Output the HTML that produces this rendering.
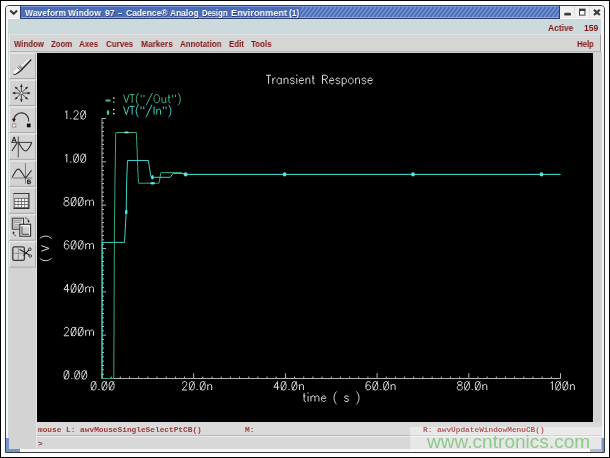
<!DOCTYPE html>
<html>
<head>
<meta charset="utf-8">
<style>
html,body{margin:0;padding:0;}
body{width:610px;height:458px;overflow:hidden;background:#fff;position:relative;font-family:"Liberation Sans",sans-serif;}
.abs{position:absolute;}
.tt,.mn,.status,#wm{will-change:transform;}
#outer{left:0;top:0;width:608px;height:456px;border:1px solid #000;}
#win{left:5px;top:5px;width:598px;height:446px;border:1px solid #3c3c3c;border-radius:4px 4px 0 0;background:#f6f6f6;}
#inner{left:8.2px;top:19px;width:593px;height:430.3px;background:#cddadd;}
#title{left:20px;top:5px;width:540px;height:14px;background:#4b6cb7;overflow:hidden;box-sizing:border-box;border-top:1px solid #2c3c66;border-bottom:1px solid #2c3c66;border-left:1px solid #2c3c66;border-right:1px solid #2c3c66;}
#titlehl{left:21px;top:6px;width:538px;height:1px;background:#7f9bdc;}
#titlehl2{left:21px;top:17px;width:538px;height:1px;background:#8ea8e0;}
.tbtn{top:6px;height:12px;background:#f1f1f1;}
.tt{text-shadow:0.6px 0.6px 0.5px rgba(10,20,60,0.55);top:6.3px;font-size:9.6px;font-weight:bold;color:#fff;line-height:13px;white-space:nowrap;transform-origin:0 0;}
#menubar{left:9px;top:34px;width:592px;height:18px;background:#d6d6d6;box-sizing:border-box;border-top:1px solid #e2e2e2;border-left:1px solid #ececec;border-right:1px solid #a0a0a0;border-bottom:1px solid #b4b4b4;}
.mn{top:39.0px;font-size:8.6px;font-weight:bold;color:#801616;line-height:11px;white-space:nowrap;transform-origin:0 0;}
#grayarea{left:8.5px;top:52px;width:593px;height:397.3px;background:#d3d3d3;}
#tbline{left:36px;top:53px;width:1px;height:396px;background:#e6e6e6;}
#plot{left:37px;top:53px;width:556px;height:369px;background:#000;}
#status1{left:37px;top:422px;width:564px;height:12.6px;background:#dadada;border-bottom:1px solid #b8b8b8;}
#status2{left:37px;top:436px;width:564px;height:13px;background:#d8d8d8;border-top:1px solid #ededed;box-sizing:border-box;}
.status{font-family:"Liberation Mono",monospace;font-size:7.8px;font-weight:bold;color:#a03a3a;white-space:pre;line-height:10px;}
.corner{background:#7793cc;}
#wmbox{left:410px;top:427px;width:192px;height:25px;background:rgba(255,255,255,0.4);}
#wm{left:426.8px;top:430.7px;font-size:19px;line-height:22px;color:#8fca8d;white-space:nowrap;transform-origin:0 0;transform:scaleX(1.004);}
svg{position:absolute;left:0;top:0;}
</style>
</head>
<body>
<div class="abs" id="outer"></div>
<div class="abs" id="win"></div>
<div class="abs" id="inner"></div>
<div class="abs" id="title"></div>
<div class="abs" id="titlehl"></div>
<div class="abs" id="titlehl2"></div>
<svg width="610" height="24" viewBox="0 0 610 24"><defs><clipPath id="hc"><rect x="300.5" y="7" width="258.5" height="10"/></clipPath></defs><path d="M284.0 17.5L292.0 6.5M288.0 17.5L296.0 6.5M292.0 17.5L300.0 6.5M296.0 17.5L304.0 6.5M300.0 17.5L308.0 6.5M304.0 17.5L312.0 6.5M308.0 17.5L316.0 6.5M312.0 17.5L320.0 6.5M316.0 17.5L324.0 6.5M320.0 17.5L328.0 6.5M324.0 17.5L332.0 6.5M328.0 17.5L336.0 6.5M332.0 17.5L340.0 6.5M336.0 17.5L344.0 6.5M340.0 17.5L348.0 6.5M344.0 17.5L352.0 6.5M348.0 17.5L356.0 6.5M352.0 17.5L360.0 6.5M356.0 17.5L364.0 6.5M360.0 17.5L368.0 6.5M364.0 17.5L372.0 6.5M368.0 17.5L376.0 6.5M372.0 17.5L380.0 6.5M376.0 17.5L384.0 6.5M380.0 17.5L388.0 6.5M384.0 17.5L392.0 6.5M388.0 17.5L396.0 6.5M392.0 17.5L400.0 6.5M396.0 17.5L404.0 6.5M400.0 17.5L408.0 6.5M404.0 17.5L412.0 6.5M408.0 17.5L416.0 6.5M412.0 17.5L420.0 6.5M416.0 17.5L424.0 6.5M420.0 17.5L428.0 6.5M424.0 17.5L432.0 6.5M428.0 17.5L436.0 6.5M432.0 17.5L440.0 6.5M436.0 17.5L444.0 6.5M440.0 17.5L448.0 6.5M444.0 17.5L452.0 6.5M448.0 17.5L456.0 6.5M452.0 17.5L460.0 6.5M456.0 17.5L464.0 6.5M460.0 17.5L468.0 6.5M464.0 17.5L472.0 6.5M468.0 17.5L476.0 6.5M472.0 17.5L480.0 6.5M476.0 17.5L484.0 6.5M480.0 17.5L488.0 6.5M484.0 17.5L492.0 6.5M488.0 17.5L496.0 6.5M492.0 17.5L500.0 6.5M496.0 17.5L504.0 6.5M500.0 17.5L508.0 6.5M504.0 17.5L512.0 6.5M508.0 17.5L516.0 6.5M512.0 17.5L520.0 6.5M516.0 17.5L524.0 6.5M520.0 17.5L528.0 6.5M524.0 17.5L532.0 6.5M528.0 17.5L536.0 6.5M532.0 17.5L540.0 6.5M536.0 17.5L544.0 6.5M540.0 17.5L548.0 6.5M544.0 17.5L552.0 6.5M548.0 17.5L556.0 6.5M552.0 17.5L560.0 6.5M556.0 17.5L564.0 6.5M560.0 17.5L568.0 6.5M564.0 17.5L572.0 6.5M568.0 17.5L576.0 6.5M572.0 17.5L580.0 6.5" stroke="#7997d5" stroke-width="1.4" fill="none" clip-path="url(#hc)"/></svg>
<div class="abs tbtn" style="left:6px;width:14px;border-radius:3px 0 0 0"></div>
<div class="abs tbtn" style="left:560px;width:44px;border-radius:0 3px 0 0"></div>
<div class="abs" style="left:574px;top:6px;width:1px;height:12px;background:#dcdcdc"></div>
<div class="abs" style="left:589px;top:6px;width:1px;height:12px;background:#dcdcdc"></div>
<svg width="610" height="24" viewBox="0 0 610 24">
<path d="M10.3 10.6L13.7 13.8L17.1 10.6" fill="none" stroke="#3a3a3a" stroke-width="2.1"/>
<rect x="564.2" y="12.8" width="6.8" height="2.8" rx="1.2" fill="#3c3c3c"/>
<rect x="579.5" y="9.3" width="5.4" height="5.8" fill="#fff" stroke="#3c3c3c" stroke-width="1"/>
<rect x="579" y="8.8" width="6.4" height="2.2" fill="#3c3c3c"/>
<path d="M594 9.8L599.8 15M599.8 9.8L594 15" fill="none" stroke="#3a3a3a" stroke-width="2.2"/>
</svg>
<div class="abs" id="menubar"></div>
<div class="abs tt" style="left:24.7px;transform:scaleX(0.891)">Waveform</div>
<div class="abs tt" style="left:68.2px;transform:scaleX(0.899)">Window</div>
<div class="abs tt" style="left:105.1px;transform:scaleX(0.918)">97</div>
<div class="abs tt" style="left:117.9px;transform:scaleX(0.767)">–</div>
<div class="abs tt" style="left:125.5px;transform:scaleX(0.882)">Cadence®</div>
<div class="abs tt" style="left:169.6px;transform:scaleX(0.880)">Analog</div>
<div class="abs tt" style="left:201.6px;transform:scaleX(0.797)">Design</div>
<div class="abs tt" style="left:230.8px;transform:scaleX(0.955)">Environment</div>
<div class="abs tt" style="left:289.4px;transform:scaleX(0.869)">(1)</div>
<div class="abs mn" style="left:14.0px;transform:scaleX(0.907)">Window</div>
<div class="abs mn" style="left:51.4px;transform:scaleX(0.902)">Zoom</div>
<div class="abs mn" style="left:79.2px;transform:scaleX(0.930)">Axes</div>
<div class="abs mn" style="left:105.8px;transform:scaleX(0.933)">Curves</div>
<div class="abs mn" style="left:140.6px;transform:scaleX(0.965)">Markers</div>
<div class="abs mn" style="left:179.6px;transform:scaleX(0.915)">Annotation</div>
<div class="abs mn" style="left:228.7px;transform:scaleX(0.924)">Edit</div>
<div class="abs mn" style="left:250.9px;transform:scaleX(0.925)">Tools</div>
<div class="abs mn" style="left:576.5px;transform:scaleX(0.902)">Help</div>
<div class="abs mn" style="top:22.6px;left:547.9px;transform:scaleX(0.977)">Active</div>
<div class="abs mn" style="top:22.6px;left:583.7px;transform:scaleX(0.969)">159</div>
<div class="abs" id="grayarea"></div>
<div class="abs" id="tbline"></div>
<div class="abs" id="plot"></div>
<div class="abs" id="status1"></div>
<div class="abs" id="status2"></div>
<div class="abs status" style="left:38.4px;top:424.8px">mouse L: awvMouseSingleSelectPtCB()</div>
<div class="abs status" style="left:244.5px;top:424.8px">M:</div>
<div class="abs status" style="left:38px;top:438.5px">&gt;</div>
<div class="abs corner" style="left:6px;top:438px;width:3px;height:14px"></div>
<div class="abs corner" style="left:6px;top:449.2px;width:13.7px;height:2.8px"></div>
<div class="abs corner" style="left:601px;top:438px;width:3px;height:14px"></div>
<div class="abs corner" style="left:590.3px;top:449.2px;width:13.7px;height:2.8px"></div>
<svg width="610" height="458" viewBox="0 0 610 458">
<path d="M268.57 75.19L268.57 83.80M266.10 75.19L271.04 75.19M272.80 78.06L272.80 83.80M272.80 80.52L273.15 79.29L273.86 78.47L274.56 78.06L275.62 78.06M281.26 78.06L281.26 83.80M281.26 79.29L280.55 78.47L279.85 78.06L278.79 78.06L278.09 78.47L277.38 79.29L277.03 80.52L277.03 81.34L277.38 82.57L278.09 83.39L278.79 83.80L279.85 83.80L280.55 83.39L281.26 82.57M284.08 78.06L284.08 83.80M284.08 79.70L285.14 78.47L285.84 78.06L286.90 78.06L287.60 78.47L287.96 79.70L287.96 83.80M294.30 79.29L293.95 78.47L292.89 78.06L291.83 78.06L290.78 78.47L290.42 79.29L290.78 80.11L291.48 80.52L293.24 80.93L293.95 81.34L294.30 82.16L294.30 82.57L293.95 83.39L292.89 83.80L291.83 83.80L290.78 83.39L290.42 82.57M296.42 75.19L296.77 75.60L297.12 75.19L296.77 74.78L296.42 75.19M296.77 78.06L296.77 83.80M299.24 80.52L303.47 80.52L303.47 79.70L303.11 78.88L302.76 78.47L302.06 78.06L301.00 78.06L300.29 78.47L299.59 79.29L299.24 80.52L299.24 81.34L299.59 82.57L300.29 83.39L301.00 83.80L302.06 83.80L302.76 83.39L303.47 82.57M305.94 78.06L305.94 83.80M305.94 79.70L306.99 78.47L307.70 78.06L308.75 78.06L309.46 78.47L309.81 79.70L309.81 83.80M312.98 75.19L312.98 82.16L313.34 83.39L314.04 83.80L314.75 83.80M311.93 78.06L314.39 78.06M322.50 75.19L322.50 83.80M322.50 75.19L325.67 75.19L326.73 75.60L327.08 76.01L327.44 76.83L327.44 77.65L327.08 78.47L326.73 78.88L325.67 79.29L322.50 79.29M324.97 79.29L327.44 83.80M329.55 80.52L333.78 80.52L333.78 79.70L333.43 78.88L333.08 78.47L332.37 78.06L331.31 78.06L330.61 78.47L329.90 79.29L329.55 80.52L329.55 81.34L329.90 82.57L330.61 83.39L331.31 83.80L332.37 83.80L333.08 83.39L333.78 82.57M339.77 79.29L339.42 78.47L338.36 78.06L337.31 78.06L336.25 78.47L335.90 79.29L336.25 80.11L336.95 80.52L338.72 80.93L339.42 81.34L339.77 82.16L339.77 82.57L339.42 83.39L338.36 83.80L337.31 83.80L336.25 83.39L335.90 82.57M342.24 78.06L342.24 86.67M342.24 79.29L342.95 78.47L343.65 78.06L344.71 78.06L345.41 78.47L346.12 79.29L346.47 80.52L346.47 81.34L346.12 82.57L345.41 83.39L344.71 83.80L343.65 83.80L342.95 83.39L342.24 82.57M350.35 78.06L349.64 78.47L348.94 79.29L348.59 80.52L348.59 81.34L348.94 82.57L349.64 83.39L350.35 83.80L351.41 83.80L352.11 83.39L352.82 82.57L353.17 81.34L353.17 80.52L352.82 79.29L352.11 78.47L351.41 78.06L350.35 78.06M355.64 78.06L355.64 83.80M355.64 79.70L356.69 78.47L357.40 78.06L358.46 78.06L359.16 78.47L359.51 79.70L359.51 83.80M365.86 79.29L365.51 78.47L364.45 78.06L363.39 78.06L362.33 78.47L361.98 79.29L362.33 80.11L363.04 80.52L364.80 80.93L365.51 81.34L365.86 82.16L365.86 82.57L365.51 83.39L364.45 83.80L363.39 83.80L362.33 83.39L361.98 82.57M367.97 80.52L372.20 80.52L372.20 79.70L371.85 78.88L371.50 78.47L370.79 78.06L369.74 78.06L369.03 78.47L368.33 79.29L367.97 80.52L367.97 81.34L368.33 82.57L369.03 83.39L369.74 83.80L370.79 83.80L371.50 83.39L372.20 82.57" fill="none" stroke="#dcdcdc" stroke-width="1" />
<path d="M123.55 94.61L126.31 102.80M129.08 94.61L126.31 102.80M132.20 94.61L132.20 102.80M129.77 94.61L134.62 94.61M138.77 93.05L138.08 93.83L137.39 95.00L136.69 96.56L136.35 98.51L136.35 100.07L136.69 102.02L137.39 103.58L138.08 104.75L138.77 105.53M141.19 94.61L141.19 97.34M143.96 94.61L143.96 97.34M152.26 93.05L146.04 105.53M156.07 94.61L155.38 95.00L154.69 95.78L154.34 96.56L153.99 97.73L153.99 99.68L154.34 100.85L154.69 101.63L155.38 102.41L156.07 102.80L157.45 102.80L158.15 102.41L158.84 101.63L159.18 100.85L159.53 99.68L159.53 97.73L159.18 96.56L158.84 95.78L158.15 95.00L157.45 94.61L156.07 94.61M161.95 97.34L161.95 101.24L162.30 102.41L162.99 102.80L164.03 102.80L164.72 102.41L165.76 101.24M165.76 97.34L165.76 102.80M168.87 94.61L168.87 101.24L169.22 102.41L169.91 102.80L170.60 102.80M167.83 97.34L170.26 97.34M172.68 94.61L172.68 97.34M175.45 94.61L175.45 97.34M177.87 93.05L178.56 93.83L179.25 95.00L179.94 96.56L180.29 98.51L180.29 100.07L179.94 102.02L179.25 103.58L178.56 104.75L177.87 105.53" fill="none" stroke="#3fae86" stroke-width="1" />
<path d="M123.54 106.41L126.29 114.60M129.03 106.41L126.29 114.60M132.12 106.41L132.12 114.60M129.72 106.41L134.52 106.41M138.63 104.85L137.95 105.63L137.26 106.80L136.58 108.36L136.23 110.31L136.23 111.87L136.58 113.82L137.26 115.38L137.95 116.55L138.63 117.33M141.04 106.41L141.04 109.14M143.78 106.41L143.78 109.14M152.01 104.85L145.84 117.33M154.07 106.41L154.07 114.60M156.81 109.14L156.81 114.60M156.81 110.70L157.84 109.53L158.53 109.14L159.56 109.14L160.24 109.53L160.59 110.70L160.59 114.60M163.33 106.41L163.33 109.14M166.07 106.41L166.07 109.14M168.48 104.85L169.16 105.63L169.85 106.80L170.53 108.36L170.88 110.31L170.88 111.87L170.53 113.82L169.85 115.38L169.16 116.55L168.48 117.33" fill="none" stroke="#45cfc8" stroke-width="1" />
<ellipse cx="108.0" cy="100.5" rx="2.9" ry="1.25" fill="#45a882"/>
<ellipse cx="108.0" cy="112.5" rx="1.25" ry="2.5" fill="#3fcfae"/>
<rect x="113.0" y="97.4" width="1.5" height="1.4" fill="#dfe8e6"/>
<rect x="113.0" y="101.5" width="1.5" height="1.4" fill="#6fc4a4"/>
<rect x="113.0" y="108.9" width="1.5" height="1.4" fill="#e4ecec"/>
<rect x="113.0" y="112.9" width="1.5" height="1.4" fill="#dfe8e8"/>
<path d="M65.04 112.30L65.75 111.90L66.82 110.70L66.82 119.10M70.73 118.30L70.38 118.70L70.73 119.10L71.09 118.70L70.73 118.30M73.94 112.70L73.94 112.30L74.29 111.50L74.65 111.10L75.36 110.70L76.78 110.70L77.50 111.10L77.85 111.50L78.21 112.30L78.21 113.10L77.85 113.90L77.14 115.10L73.58 119.10L78.56 119.10M82.84 110.70L81.77 111.10L81.06 112.30L80.70 114.30L80.70 115.50L81.06 117.50L81.77 118.70L82.84 119.10L83.55 119.10L84.62 118.70L85.33 117.50L85.68 115.50L85.68 114.30L85.33 112.30L84.62 111.10L83.55 110.70L82.84 110.70M80.88 119.30L85.51 110.50" fill="none" stroke="#dcdcdc" stroke-width="1" />
<path d="M65.04 155.63L65.75 155.23L66.82 154.03L66.82 162.43M70.73 161.63L70.38 162.03L70.73 162.43L71.09 162.03L70.73 161.63M75.72 154.03L74.65 154.43L73.94 155.63L73.58 157.63L73.58 158.83L73.94 160.83L74.65 162.03L75.72 162.43L76.43 162.43L77.50 162.03L78.21 160.83L78.56 158.83L78.56 157.63L78.21 155.63L77.50 154.43L76.43 154.03L75.72 154.03M73.76 162.63L78.39 153.83M82.84 154.03L81.77 154.43L81.06 155.63L80.70 157.63L80.70 158.83L81.06 160.83L81.77 162.03L82.84 162.43L83.55 162.43L84.62 162.03L85.33 160.83L85.68 158.83L85.68 157.63L85.33 155.63L84.62 154.43L83.55 154.03L82.84 154.03M80.88 162.63L85.51 153.83" fill="none" stroke="#dcdcdc" stroke-width="1" />
<path d="M65.75 197.36L64.68 197.76L64.32 198.56L64.32 199.36L64.68 200.16L65.39 200.56L66.82 200.96L67.88 201.36L68.60 202.16L68.95 202.96L68.95 204.16L68.60 204.96L68.24 205.36L67.17 205.76L65.75 205.76L64.68 205.36L64.32 204.96L63.97 204.16L63.97 202.96L64.32 202.16L65.04 201.36L66.10 200.96L67.53 200.56L68.24 200.16L68.60 199.36L68.60 198.56L68.24 197.76L67.17 197.36L65.75 197.36M73.22 197.36L72.16 197.76L71.44 198.96L71.09 200.96L71.09 202.16L71.44 204.16L72.16 205.36L73.22 205.76L73.94 205.76L75.00 205.36L75.72 204.16L76.07 202.16L76.07 200.96L75.72 198.96L75.00 197.76L73.94 197.36L73.22 197.36M71.27 205.96L75.89 197.16M80.34 197.36L79.28 197.76L78.56 198.96L78.21 200.96L78.21 202.16L78.56 204.16L79.28 205.36L80.34 205.76L81.06 205.76L82.12 205.36L82.84 204.16L83.19 202.16L83.19 200.96L82.84 198.96L82.12 197.76L81.06 197.36L80.34 197.36M78.39 205.96L83.01 197.16M85.68 200.16L85.68 205.76M85.68 201.76L86.75 200.56L87.46 200.16L88.53 200.16L89.24 200.56L89.60 201.76L89.60 205.76M89.60 201.76L90.67 200.56L91.38 200.16L92.45 200.16L93.16 200.56L93.52 201.76L93.52 205.76" fill="none" stroke="#dcdcdc" stroke-width="1" />
<path d="M68.60 241.90L68.24 241.10L67.17 240.70L66.46 240.70L65.39 241.10L64.68 242.30L64.32 244.30L64.32 246.30L64.68 247.90L65.39 248.70L66.46 249.10L66.82 249.10L67.88 248.70L68.60 247.90L68.95 246.70L68.95 246.30L68.60 245.10L67.88 244.30L66.82 243.90L66.46 243.90L65.39 244.30L64.68 245.10L64.32 246.30M73.22 240.70L72.16 241.10L71.44 242.30L71.09 244.30L71.09 245.50L71.44 247.50L72.16 248.70L73.22 249.10L73.94 249.10L75.00 248.70L75.72 247.50L76.07 245.50L76.07 244.30L75.72 242.30L75.00 241.10L73.94 240.70L73.22 240.70M71.27 249.30L75.89 240.50M80.34 240.70L79.28 241.10L78.56 242.30L78.21 244.30L78.21 245.50L78.56 247.50L79.28 248.70L80.34 249.10L81.06 249.10L82.12 248.70L82.84 247.50L83.19 245.50L83.19 244.30L82.84 242.30L82.12 241.10L81.06 240.70L80.34 240.70M78.39 249.30L83.01 240.50M85.68 243.50L85.68 249.10M85.68 245.10L86.75 243.90L87.46 243.50L88.53 243.50L89.24 243.90L89.60 245.10L89.60 249.10M89.60 245.10L90.67 243.90L91.38 243.50L92.45 243.50L93.16 243.90L93.52 245.10L93.52 249.10" fill="none" stroke="#dcdcdc" stroke-width="1" />
<path d="M67.53 284.03L63.97 289.63L69.31 289.63M67.53 284.03L67.53 292.43M73.22 284.03L72.16 284.43L71.44 285.63L71.09 287.63L71.09 288.83L71.44 290.83L72.16 292.03L73.22 292.43L73.94 292.43L75.00 292.03L75.72 290.83L76.07 288.83L76.07 287.63L75.72 285.63L75.00 284.43L73.94 284.03L73.22 284.03M71.27 292.63L75.89 283.83M80.34 284.03L79.28 284.43L78.56 285.63L78.21 287.63L78.21 288.83L78.56 290.83L79.28 292.03L80.34 292.43L81.06 292.43L82.12 292.03L82.84 290.83L83.19 288.83L83.19 287.63L82.84 285.63L82.12 284.43L81.06 284.03L80.34 284.03M78.39 292.63L83.01 283.83M85.68 286.83L85.68 292.43M85.68 288.43L86.75 287.23L87.46 286.83L88.53 286.83L89.24 287.23L89.60 288.43L89.60 292.43M89.60 288.43L90.67 287.23L91.38 286.83L92.45 286.83L93.16 287.23L93.52 288.43L93.52 292.43" fill="none" stroke="#dcdcdc" stroke-width="1" />
<path d="M64.32 329.37L64.32 328.97L64.68 328.17L65.04 327.77L65.75 327.37L67.17 327.37L67.88 327.77L68.24 328.17L68.60 328.97L68.60 329.77L68.24 330.57L67.53 331.77L63.97 335.77L68.95 335.77M73.22 327.37L72.16 327.77L71.44 328.97L71.09 330.97L71.09 332.17L71.44 334.17L72.16 335.37L73.22 335.77L73.94 335.77L75.00 335.37L75.72 334.17L76.07 332.17L76.07 330.97L75.72 328.97L75.00 327.77L73.94 327.37L73.22 327.37M71.27 335.97L75.89 327.17M80.34 327.37L79.28 327.77L78.56 328.97L78.21 330.97L78.21 332.17L78.56 334.17L79.28 335.37L80.34 335.77L81.06 335.77L82.12 335.37L82.84 334.17L83.19 332.17L83.19 330.97L82.84 328.97L82.12 327.77L81.06 327.37L80.34 327.37M78.39 335.97L83.01 327.17M85.68 330.17L85.68 335.77M85.68 331.77L86.75 330.57L87.46 330.17L88.53 330.17L89.24 330.57L89.60 331.77L89.60 335.77M89.60 331.77L90.67 330.57L91.38 330.17L92.45 330.17L93.16 330.57L93.52 331.77L93.52 335.77" fill="none" stroke="#dcdcdc" stroke-width="1" />
<path d="M66.10 370.70L65.04 371.10L64.32 372.30L63.97 374.30L63.97 375.50L64.32 377.50L65.04 378.70L66.10 379.10L66.82 379.10L67.88 378.70L68.60 377.50L68.95 375.50L68.95 374.30L68.60 372.30L67.88 371.10L66.82 370.70L66.10 370.70M64.15 379.30L68.77 370.50M71.80 378.30L71.44 378.70L71.80 379.10L72.16 378.70L71.80 378.30M76.78 370.70L75.72 371.10L75.00 372.30L74.65 374.30L74.65 375.50L75.00 377.50L75.72 378.70L76.78 379.10L77.50 379.10L78.56 378.70L79.28 377.50L79.63 375.50L79.63 374.30L79.28 372.30L78.56 371.10L77.50 370.70L76.78 370.70M74.83 379.30L79.45 370.50M83.90 370.70L82.84 371.10L82.12 372.30L81.77 374.30L81.77 375.50L82.12 377.50L82.84 378.70L83.90 379.10L84.62 379.10L85.68 378.70L86.40 377.50L86.75 375.50L86.75 374.30L86.40 372.30L85.68 371.10L84.62 370.70L83.90 370.70M81.95 379.30L86.57 370.50" fill="none" stroke="#dcdcdc" stroke-width="1" />
<path d="M93.24 381.60L92.16 382.00L91.44 383.20L91.08 385.20L91.08 386.40L91.44 388.40L92.16 389.60L93.24 390.00L93.96 390.00L95.04 389.60L95.76 388.40L96.12 386.40L96.12 385.20L95.76 383.20L95.04 382.00L93.96 381.60L93.24 381.60M91.26 390.20L95.94 381.40M99.00 389.20L98.64 389.60L99.00 390.00L99.36 389.60L99.00 389.20M104.04 381.60L102.96 382.00L102.24 383.20L101.88 385.20L101.88 386.40L102.24 388.40L102.96 389.60L104.04 390.00L104.76 390.00L105.84 389.60L106.56 388.40L106.92 386.40L106.92 385.20L106.56 383.20L105.84 382.00L104.76 381.60L104.04 381.60M102.06 390.20L106.74 381.40M111.24 381.60L110.16 382.00L109.44 383.20L109.08 385.20L109.08 386.40L109.44 388.40L110.16 389.60L111.24 390.00L111.96 390.00L113.04 389.60L113.76 388.40L114.12 386.40L114.12 385.20L113.76 383.20L113.04 382.00L111.96 381.60L111.24 381.60M109.26 390.20L113.94 381.40" fill="none" stroke="#dcdcdc" stroke-width="1" />
<path d="M182.54 383.60L182.54 383.20L182.90 382.40L183.26 382.00L183.98 381.60L185.42 381.60L186.14 382.00L186.50 382.40L186.86 383.20L186.86 384.00L186.50 384.80L185.78 386.00L182.18 390.00L187.22 390.00M191.54 381.60L190.46 382.00L189.74 383.20L189.38 385.20L189.38 386.40L189.74 388.40L190.46 389.60L191.54 390.00L192.26 390.00L193.34 389.60L194.06 388.40L194.42 386.40L194.42 385.20L194.06 383.20L193.34 382.00L192.26 381.60L191.54 381.60M189.56 390.20L194.24 381.40M197.30 389.20L196.94 389.60L197.30 390.00L197.66 389.60L197.30 389.20M202.34 381.60L201.26 382.00L200.54 383.20L200.18 385.20L200.18 386.40L200.54 388.40L201.26 389.60L202.34 390.00L203.06 390.00L204.14 389.60L204.86 388.40L205.22 386.40L205.22 385.20L204.86 383.20L204.14 382.00L203.06 381.60L202.34 381.60M200.36 390.20L205.04 381.40M207.74 384.40L207.74 390.00M207.74 386.00L208.82 384.80L209.54 384.40L210.62 384.40L211.34 384.80L211.70 386.00L211.70 390.00" fill="none" stroke="#dcdcdc" stroke-width="1" />
<path d="M277.48 381.60L273.88 387.20L279.28 387.20M277.48 381.60L277.48 390.00M283.24 381.60L282.16 382.00L281.44 383.20L281.08 385.20L281.08 386.40L281.44 388.40L282.16 389.60L283.24 390.00L283.96 390.00L285.04 389.60L285.76 388.40L286.12 386.40L286.12 385.20L285.76 383.20L285.04 382.00L283.96 381.60L283.24 381.60M281.26 390.20L285.94 381.40M289.00 389.20L288.64 389.60L289.00 390.00L289.36 389.60L289.00 389.20M294.04 381.60L292.96 382.00L292.24 383.20L291.88 385.20L291.88 386.40L292.24 388.40L292.96 389.60L294.04 390.00L294.76 390.00L295.84 389.60L296.56 388.40L296.92 386.40L296.92 385.20L296.56 383.20L295.84 382.00L294.76 381.60L294.04 381.60M292.06 390.20L296.74 381.40M299.44 384.40L299.44 390.00M299.44 386.00L300.52 384.80L301.24 384.40L302.32 384.40L303.04 384.80L303.40 386.00L303.40 390.00" fill="none" stroke="#dcdcdc" stroke-width="1" />
<path d="M370.26 382.80L369.90 382.00L368.82 381.60L368.10 381.60L367.02 382.00L366.30 383.20L365.94 385.20L365.94 387.20L366.30 388.80L367.02 389.60L368.10 390.00L368.46 390.00L369.54 389.60L370.26 388.80L370.62 387.60L370.62 387.20L370.26 386.00L369.54 385.20L368.46 384.80L368.10 384.80L367.02 385.20L366.30 386.00L365.94 387.20M374.94 381.60L373.86 382.00L373.14 383.20L372.78 385.20L372.78 386.40L373.14 388.40L373.86 389.60L374.94 390.00L375.66 390.00L376.74 389.60L377.46 388.40L377.82 386.40L377.82 385.20L377.46 383.20L376.74 382.00L375.66 381.60L374.94 381.60M372.96 390.20L377.64 381.40M380.70 389.20L380.34 389.60L380.70 390.00L381.06 389.60L380.70 389.20M385.74 381.60L384.66 382.00L383.94 383.20L383.58 385.20L383.58 386.40L383.94 388.40L384.66 389.60L385.74 390.00L386.46 390.00L387.54 389.60L388.26 388.40L388.62 386.40L388.62 385.20L388.26 383.20L387.54 382.00L386.46 381.60L385.74 381.60M383.76 390.20L388.44 381.40M391.14 384.40L391.14 390.00M391.14 386.00L392.22 384.80L392.94 384.40L394.02 384.40L394.74 384.80L395.10 386.00L395.10 390.00" fill="none" stroke="#dcdcdc" stroke-width="1" />
<path d="M459.08 381.60L458.00 382.00L457.64 382.80L457.64 383.60L458.00 384.40L458.72 384.80L460.16 385.20L461.24 385.60L461.96 386.40L462.32 387.20L462.32 388.40L461.96 389.20L461.60 389.60L460.52 390.00L459.08 390.00L458.00 389.60L457.64 389.20L457.28 388.40L457.28 387.20L457.64 386.40L458.36 385.60L459.44 385.20L460.88 384.80L461.60 384.40L461.96 383.60L461.96 382.80L461.60 382.00L460.52 381.60L459.08 381.60M466.64 381.60L465.56 382.00L464.84 383.20L464.48 385.20L464.48 386.40L464.84 388.40L465.56 389.60L466.64 390.00L467.36 390.00L468.44 389.60L469.16 388.40L469.52 386.40L469.52 385.20L469.16 383.20L468.44 382.00L467.36 381.60L466.64 381.60M464.66 390.20L469.34 381.40M472.40 389.20L472.04 389.60L472.40 390.00L472.76 389.60L472.40 389.20M477.44 381.60L476.36 382.00L475.64 383.20L475.28 385.20L475.28 386.40L475.64 388.40L476.36 389.60L477.44 390.00L478.16 390.00L479.24 389.60L479.96 388.40L480.32 386.40L480.32 385.20L479.96 383.20L479.24 382.00L478.16 381.60L477.44 381.60M475.46 390.20L480.14 381.40M482.84 384.40L482.84 390.00M482.84 386.00L483.92 384.80L484.64 384.40L485.72 384.40L486.44 384.80L486.80 386.00L486.80 390.00" fill="none" stroke="#dcdcdc" stroke-width="1" />
<path d="M550.56 383.20L551.28 382.80L552.36 381.60L552.36 390.00M557.76 381.60L556.68 382.00L555.96 383.20L555.60 385.20L555.60 386.40L555.96 388.40L556.68 389.60L557.76 390.00L558.48 390.00L559.56 389.60L560.28 388.40L560.64 386.40L560.64 385.20L560.28 383.20L559.56 382.00L558.48 381.60L557.76 381.60M555.78 390.20L560.46 381.40M564.96 381.60L563.88 382.00L563.16 383.20L562.80 385.20L562.80 386.40L563.16 388.40L563.88 389.60L564.96 390.00L565.68 390.00L566.76 389.60L567.48 388.40L567.84 386.40L567.84 385.20L567.48 383.20L566.76 382.00L565.68 381.60L564.96 381.60M562.98 390.20L567.66 381.40M570.36 384.40L570.36 390.00M570.36 386.00L571.44 384.80L572.16 384.40L573.24 384.40L573.96 384.80L574.32 386.00L574.32 390.00" fill="none" stroke="#dcdcdc" stroke-width="1" />
<path d="M304.11 393.10L304.11 399.90L304.47 401.10L305.19 401.50L305.91 401.50M303.02 395.90L305.55 395.90M307.72 393.10L308.08 393.50L308.44 393.10L308.08 392.70L307.72 393.10M308.08 395.90L308.08 401.50M310.96 395.90L310.96 401.50M310.96 397.50L312.05 396.30L312.77 395.90L313.85 395.90L314.57 396.30L314.94 397.50L314.94 401.50M314.94 397.50L316.02 396.30L316.74 395.90L317.82 395.90L318.54 396.30L318.91 397.50L318.91 401.50M321.43 398.30L325.76 398.30L325.76 397.50L325.40 396.70L325.04 396.30L324.32 395.90L323.24 395.90L322.52 396.30L321.79 397.10L321.43 398.30L321.43 399.10L321.79 400.30L322.52 401.10L323.24 401.50L324.32 401.50L325.04 401.10L325.76 400.30M336.59 391.50L335.87 392.30L335.15 393.50L334.43 395.10L334.07 397.10L334.07 398.70L334.43 400.70L335.15 402.30L335.87 403.50L336.59 404.30M348.51 397.10L348.15 396.30L347.06 395.90L345.98 395.90L344.90 396.30L344.54 397.10L344.90 397.90L345.62 398.30L347.42 398.70L348.15 399.10L348.51 399.90L348.51 400.30L348.15 401.10L347.06 401.50L345.98 401.50L344.90 401.10L344.54 400.30M356.45 391.50L357.17 392.30L357.89 393.50L358.62 395.10L358.98 397.10L358.98 398.70L358.62 400.70L357.89 402.30L357.17 403.50L356.45 404.30" fill="none" stroke="#dcdcdc" stroke-width="1" />
<path d="M3.85 -9.25L3.15 -8.51L2.45 -7.40L1.75 -5.92L1.40 -4.07L1.40 -2.59L1.75 -0.74L2.45 0.74L3.15 1.85L3.85 2.59M10.85 -7.77L13.65 0.00M16.45 -7.77L13.65 0.00M23.45 -9.25L24.15 -8.51L24.85 -7.40L25.55 -5.92L25.90 -4.07L25.90 -2.59L25.55 -0.74L24.85 0.74L24.15 1.85L23.45 2.59" fill="none" stroke="#dcdcdc" stroke-width="1" transform="translate(49.0,262.05) rotate(-90)"/>
<path d="M102.00 118.50L102.00 378.50M102.00 378.50L560.50 378.50M102.00 378.50h4M102.00 374.17h2M102.00 369.83h2M102.00 365.50h2M102.00 361.17h2M102.00 356.83h2M102.00 352.50h2M102.00 348.17h2M102.00 343.83h2M102.00 339.50h2M102.00 335.17h4M102.00 330.83h2M102.00 326.50h2M102.00 322.17h2M102.00 317.83h2M102.00 313.50h2M102.00 309.17h2M102.00 304.83h2M102.00 300.50h2M102.00 296.17h2M102.00 291.83h4M102.00 287.50h2M102.00 283.17h2M102.00 278.83h2M102.00 274.50h2M102.00 270.17h2M102.00 265.83h2M102.00 261.50h2M102.00 257.16h2M102.00 252.83h2M102.00 248.50h4M102.00 244.16h2M102.00 239.83h2M102.00 235.50h2M102.00 231.16h2M102.00 226.83h2M102.00 222.50h2M102.00 218.16h2M102.00 213.83h2M102.00 209.50h2M102.00 205.16h4M102.00 200.83h2M102.00 196.50h2M102.00 192.16h2M102.00 187.83h2M102.00 183.50h2M102.00 179.16h2M102.00 174.83h2M102.00 170.50h2M102.00 166.16h2M102.00 161.83h4M102.00 157.50h2M102.00 153.16h2M102.00 148.83h2M102.00 144.50h2M102.00 140.16h2M102.00 135.83h2M102.00 131.50h2M102.00 127.16h2M102.00 122.83h2M102.00 118.50h4M102.00 378.50v-5.3M111.17 378.50v-2M120.34 378.50v-2M129.51 378.50v-2M138.68 378.50v-2M147.85 378.50v-2M157.02 378.50v-2M166.19 378.50v-2M175.36 378.50v-2M184.53 378.50v-2M193.70 378.50v-5.3M202.87 378.50v-2M212.04 378.50v-2M221.21 378.50v-2M230.38 378.50v-2M239.55 378.50v-2M248.72 378.50v-2M257.89 378.50v-2M267.06 378.50v-2M276.23 378.50v-2M285.40 378.50v-5.3M294.57 378.50v-2M303.74 378.50v-2M312.91 378.50v-2M322.08 378.50v-2M331.25 378.50v-2M340.42 378.50v-2M349.59 378.50v-2M358.76 378.50v-2M367.93 378.50v-2M377.10 378.50v-5.3M386.27 378.50v-2M395.44 378.50v-2M404.61 378.50v-2M413.78 378.50v-2M422.95 378.50v-2M432.12 378.50v-2M441.29 378.50v-2M450.46 378.50v-2M459.63 378.50v-2M468.80 378.50v-5.3M477.97 378.50v-2M487.14 378.50v-2M496.31 378.50v-2M505.48 378.50v-2M514.65 378.50v-2M523.82 378.50v-2M532.99 378.50v-2M542.16 378.50v-2M551.33 378.50v-2M560.50 378.50v-5.3" fill="none" stroke="#b4b4b4" stroke-width="1" />
<path d="M102.00 378.50L113.80 378.50L114.40 230.00L115.00 180.00L115.70 135.00L116.10 132.50L136.30 132.50L137.00 148.00L138.10 176.00L138.50 183.20L159.00 183.20L160.90 172.60L181.50 172.60L185.00 174.40L560.50 174.40" fill="none" stroke="#3aa87c" stroke-width="1.0" stroke-linejoin="round"/>
<path d="M102.00 378.50L102.30 242.40L124.50 242.40L126.20 212.00L126.70 180.00L127.50 160.50L148.40 160.50L150.60 175.30L151.30 177.30L170.10 177.30L173.10 173.40L181.80 173.40L185.70 174.40L560.50 174.40" fill="none" stroke="#40cfc6" stroke-width="1.0" stroke-linejoin="round"/>
<ellipse cx="126.5" cy="132.4" rx="2.5" ry="0.85" fill="#a8e6d2"/>
<ellipse cx="152.6" cy="183.2" rx="2.4" ry="1.2" fill="#55e6dc"/>
<ellipse cx="126.3" cy="212.0" rx="1.3" ry="2.2" fill="#55e6dc"/>
<ellipse cx="152.4" cy="177.2" rx="1.3" ry="2.2" fill="#55e6dc"/>
<ellipse cx="185.7" cy="174.4" rx="1.9" ry="2.1" fill="#55e6dc"/>
<ellipse cx="284.6" cy="174.4" rx="1.9" ry="2.1" fill="#55e6dc"/>
<ellipse cx="413.0" cy="174.4" rx="1.9" ry="2.1" fill="#55e6dc"/>
<ellipse cx="541.5" cy="174.4" rx="1.9" ry="2.1" fill="#55e6dc"/>
</svg>
<svg width="610" height="458" viewBox="0 0 610 458">
<rect x="9.00" y="52.70" width="27.00" height="26.30" fill="#d3d3d3"/>
<path d="M9.50 78.50V53.20H35.50" fill="none" stroke="#efefef" stroke-width="1"/>
<path d="M9.50 78.50H35.50V53.20" fill="none" stroke="#a9a9a9" stroke-width="1"/>
<rect x="9.00" y="79.65" width="27.00" height="26.30" fill="#d3d3d3"/>
<path d="M9.50 105.45V80.15H35.50" fill="none" stroke="#efefef" stroke-width="1"/>
<path d="M9.50 105.45H35.50V80.15" fill="none" stroke="#a9a9a9" stroke-width="1"/>
<rect x="9.00" y="106.60" width="27.00" height="26.30" fill="#d3d3d3"/>
<path d="M9.50 132.40V107.10H35.50" fill="none" stroke="#efefef" stroke-width="1"/>
<path d="M9.50 132.40H35.50V107.10" fill="none" stroke="#a9a9a9" stroke-width="1"/>
<rect x="9.00" y="133.55" width="27.00" height="26.30" fill="#d3d3d3"/>
<path d="M9.50 159.35V134.05H35.50" fill="none" stroke="#efefef" stroke-width="1"/>
<path d="M9.50 159.35H35.50V134.05" fill="none" stroke="#a9a9a9" stroke-width="1"/>
<rect x="9.00" y="160.50" width="27.00" height="26.30" fill="#d3d3d3"/>
<path d="M9.50 186.30V161.00H35.50" fill="none" stroke="#efefef" stroke-width="1"/>
<path d="M9.50 186.30H35.50V161.00" fill="none" stroke="#a9a9a9" stroke-width="1"/>
<rect x="9.00" y="187.45" width="27.00" height="26.30" fill="#d3d3d3"/>
<path d="M9.50 213.25V187.95H35.50" fill="none" stroke="#efefef" stroke-width="1"/>
<path d="M9.50 213.25H35.50V187.95" fill="none" stroke="#a9a9a9" stroke-width="1"/>
<rect x="9.00" y="214.40" width="27.00" height="26.30" fill="#d3d3d3"/>
<path d="M9.50 240.20V214.90H35.50" fill="none" stroke="#efefef" stroke-width="1"/>
<path d="M9.50 240.20H35.50V214.90" fill="none" stroke="#a9a9a9" stroke-width="1"/>
<rect x="9.00" y="241.35" width="27.00" height="26.30" fill="#d3d3d3"/>
<path d="M9.50 267.15V241.85H35.50" fill="none" stroke="#efefef" stroke-width="1"/>
<path d="M9.50 267.15H35.50V241.85" fill="none" stroke="#a9a9a9" stroke-width="1"/>
<path d="M14.2 74.1C16 74.8 18.5 72.5 21.5 69.8L30.8 60" stroke="#222" stroke-width="1.5" fill="none" stroke-linecap="round"/>
<path d="M14.9 72.3L18.6 69.3" stroke="#f6f6f6" stroke-width="3.3" stroke-linecap="round"/>
<path d="M20.7 67.2L28.6 59.4" stroke="#ebebeb" stroke-width="2.5" stroke-linecap="butt"/>
<path d="M19.7 65.9L27.4 58.4" stroke="#bdbdbd" stroke-width="0.7"/>
<path d="M17.6 67.4L19.6 69.6M18.9 66.5L20.9 68.6M20.1 65.6L22.0 67.6" stroke="#333" stroke-width="0.8"/>
<path d="M21.40 93.10L30.20 93.10M21.40 93.10L27.76 99.46M21.40 93.10L21.40 101.90M21.40 93.10L15.04 99.46M21.40 93.10L12.60 93.10M21.40 93.10L15.04 86.74M21.40 93.10L21.40 84.30M21.40 93.10L27.76 86.74" stroke="#3a3a3a" stroke-width="0.9" fill="none"/>
<path d="M30.20 93.10L27.60 94.40L27.60 91.80ZM27.76 99.46L25.01 98.54L26.84 96.71ZM21.40 101.90L20.10 99.30L22.70 99.30ZM15.04 99.46L15.96 96.71L17.79 98.54ZM12.60 93.10L15.20 91.80L15.20 94.40ZM15.04 86.74L17.79 87.66L15.96 89.49ZM21.40 84.30L22.70 86.90L20.10 86.90ZM27.76 86.74L26.84 89.49L25.01 87.66Z" fill="#222"/>
<circle cx="21.4" cy="93.1" r="1.0" fill="#f0f0f0"/>
<path d="M28.7 121.5A7.4 7.6 0 0 0 13.9 119.5" stroke="#333" stroke-width="1.2" fill="none"/>
<path d="M15.6 114.8A7.4 7.6 0 0 0 13.9 119" stroke="#8a2a2a" stroke-width="1.0" fill="none"/>
<path d="M11.9 118.8H15.9L13.9 122.3Z" fill="#111"/>
<rect x="26.9" y="123.6" width="3.7" height="3.7" fill="#111"/>
<rect x="12.6" y="123.9" width="3.2" height="3.2" fill="#f4f4f4" stroke="#8a8a8a" stroke-width="0.9"/>
<path d="M18.3 136.6V157.4" stroke="#5a5a5a" stroke-width="1.1" fill="none"/>
<path d="M11.2 142.4H32" stroke="#3a3a3a" stroke-width="1" fill="none"/>
<path d="M11.9 151L17.3 142.6" stroke="#333" stroke-width="1.1" fill="none"/>
<path d="M18.6 142.6C21.5 147.5 22.8 151 25.5 151C28.2 151 29.5 147.5 31.8 142.6" stroke="#333" stroke-width="1.1" fill="none"/>
<path d="M12.1 142L14.1 136.9L16.1 142M12.9 140.3H15.3" stroke="#222" stroke-width="1.0" fill="none"/>
<path d="M25.45 163.2V183.6M11.2 178H32.4" stroke="#666" stroke-width="0.8" fill="none"/>
<path d="M12.3 177C15 172.5 16 169.1 18.3 169.1C20.8 169.1  22.3 174 25.4 178C27.6 176 29.6 172.5 31.6 170.3" stroke="#333" stroke-width="1.05" fill="none"/>
<path d="M27.6 179.9V183.8M27.6 180H29.3Q30.4 180 30.4 180.9Q30.4 181.8 29.3 181.8H27.6M29.3 181.8Q30.7 181.8 30.7 182.75Q30.7 183.7 29.3 183.7H27.6" stroke="#222" stroke-width="1.0" fill="none"/>
<rect x="13.6" y="193.2" width="15.2" height="15" fill="#d9d9d9"/>
<path d="M13.7 208V193.4" stroke="#9a9a9a" stroke-width="0.9" fill="none"/>
<path d="M13.4 193.5H28.9" stroke="#3a3a3a" stroke-width="1.0" fill="none"/>
<path d="M28.9 193V208.4H13.4" stroke="#333" stroke-width="1.2" fill="none"/>
<rect x="14.6" y="194.6" width="13.2" height="2.6" fill="#cdcdcd"/>
<path d="M14.4 198.4H28.2M14.4 201.5H28.2M14.4 204.6H28.2M14.4 207.4H28.2M14.8 198V207.6M18.1 198V207.6M21.4 198V207.6M24.7 198V207.6M28.0 198V207.6" stroke="#555" stroke-width="0.8" fill="none"/>
<rect x="15.30" y="199.10" width="2.3" height="1.7" fill="#fbfbfb"/>
<rect x="18.60" y="199.10" width="2.3" height="1.7" fill="#fbfbfb"/>
<rect x="21.90" y="199.10" width="2.3" height="1.7" fill="#fbfbfb"/>
<rect x="25.20" y="199.10" width="2.3" height="1.7" fill="#fbfbfb"/>
<rect x="15.30" y="202.20" width="2.3" height="1.7" fill="#fbfbfb"/>
<rect x="18.60" y="202.20" width="2.3" height="1.7" fill="#fbfbfb"/>
<rect x="21.90" y="202.20" width="2.3" height="1.7" fill="#fbfbfb"/>
<rect x="25.20" y="202.20" width="2.3" height="1.7" fill="#fbfbfb"/>
<rect x="15.30" y="205.15" width="2.3" height="1.7" fill="#fbfbfb"/>
<rect x="18.60" y="205.15" width="2.3" height="1.7" fill="#fbfbfb"/>
<rect x="21.90" y="205.15" width="2.3" height="1.7" fill="#fbfbfb"/>
<rect x="25.20" y="205.15" width="2.3" height="1.7" fill="#fbfbfb"/>
<rect x="12.3" y="218.2" width="11.2" height="11" fill="#dcdcdc" stroke="#3a3a3a" stroke-width="1"/>
<path d="M13.6 220.2H22M14 222.2H21M15 224.8H20M14 227H19" stroke="#777" stroke-width="0.8" fill="none"/>
<path d="M13.8 220V228" stroke="#999" stroke-width="0.8"/>
<rect x="19.8" y="224.3" width="10.8" height="11.9" fill="#f4f4f4" stroke="#2f2f2f" stroke-width="1.1"/>
<rect x="22" y="226.6" width="7" height="7.6" fill="#cfcfcf"/>
<path d="M21.9 226.4V234.3H29" stroke="#333" stroke-width="0.9" fill="none"/>
<path d="M25 217.8C27.2 218.2 28.4 219.4 28.6 221.2" stroke="#444" stroke-width="0.9" fill="none"/>
<path d="M27.3 220.7H29.9L28.6 222.7Z" fill="#222"/>
<path d="M16 236C14.4 235.4 13.6 234.2 13.5 232.6" stroke="#444" stroke-width="0.9" fill="none"/>
<path d="M12.2 233.2H14.8L13.5 231.2Z" fill="#222"/>
<rect x="12.8" y="246.9" width="11.6" height="13.4" rx="1.6" fill="none" stroke="#3c3c3c" stroke-width="1.3"/>
<path d="M18.3 247.5V259.8M13.4 253.3H24" stroke="#8c8c8c" stroke-width="0.9" fill="none"/>
<path d="M19.6 249.6L26 252.9L29 249.9M23.6 255.6L26 252.9L29.4 255.2" stroke="#1e1e1e" stroke-width="1.1" fill="none"/>
<circle cx="29.9" cy="249.2" r="1.3" fill="none" stroke="#333" stroke-width="0.9"/>
<circle cx="30.3" cy="256" r="1.3" fill="none" stroke="#333" stroke-width="0.9"/>
</svg>
<div class="abs" id="wmbox"></div>
<div class="abs status" style="left:423.2px;top:424.8px;color:#b25c5c">R: awvUpdateWindowMenuCB()</div>
<div class="abs" id="wm">www.cntronics.com</div>
</body>
</html>
